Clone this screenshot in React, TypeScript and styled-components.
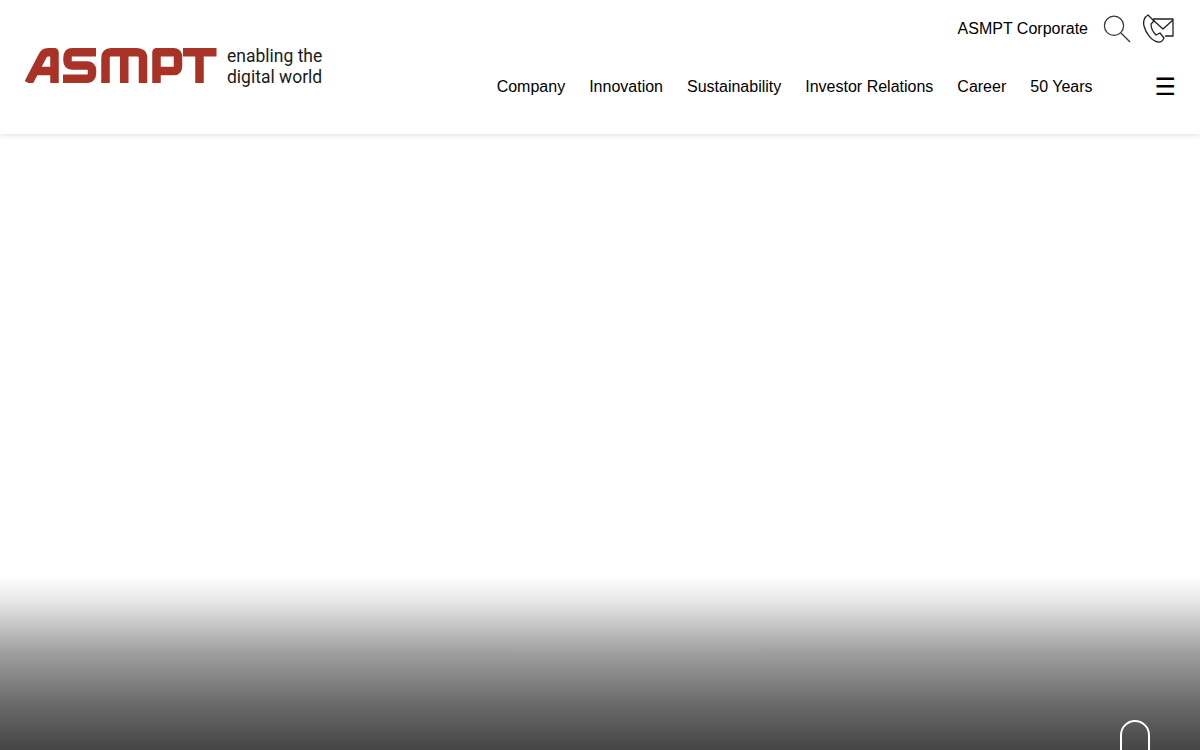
import React from 'react';
import styled, { createGlobalStyle } from 'styled-components';

const GlobalStyle = createGlobalStyle`
  html, body {
    margin: 0;
    padding: 0;
    height: 100%;
    overflow: hidden;
    background: #fff;
    font-family: "Liberation Sans", Arial, sans-serif;
  }
`;

const Page = styled.div`
  display: flex;
  flex-direction: column;
  height: 750px;
  overflow: hidden;
`;

const Header = styled.header`
  position: relative;
  z-index: 2;
  display: flex;
  justify-content: space-between;
  flex: 0 0 134px;
  padding: 0 25px;
  background: #fff;
  box-shadow: 0 1px 5px rgba(0, 0, 0, 0.14);
`;

const Brand = styled.a`
  display: flex;
  align-items: center;
  gap: 10px;
  height: 131px;
  color: #111;
  text-decoration: none;
`;

const Tagline = styled.span`
  font-family: Roboto, sans-serif;
  font-size: 17.5px;
  line-height: 21px;
  margin-top: 2px;
  color: #1a1a1a;
`;

const HeaderRight = styled.div`
  display: flex;
  flex-direction: column;
  align-items: flex-end;
`;

const TopRow = styled.div`
  display: flex;
  align-items: center;
  height: 58px;
`;

const TopLink = styled.a`
  font-size: 16px;
  color: #000;
  margin-right: 15px;
`;

const IconLink = styled.a<{ $gap?: number }>`
  display: flex;
  margin-right: ${p => p.$gap ?? 0}px;
`;

const NavRow = styled.nav`
  display: flex;
  align-items: center;
  height: 58px;
`;

const NavLink = styled.a`
  font-size: 16px;
  color: #000;
  margin-left: 24px;
`;

const Burger = styled.span`
  font-family: "DejaVu Sans", sans-serif;
  font-size: 24px;
  color: #000;
  margin-left: 61.9px;
  margin-right: 0.6px;
  width: 20px;
  text-align: center;
`;

const Hero = styled.main`
  position: relative;
  flex: 1;
  background: linear-gradient(
    to bottom,
    #fff 0,
    #fff 442px,
    #e6e6e6 468px,
    #a0a0a0 518px,
    #6c6c6c 568px,
    #454545 616px
  );
`;

const ScrollHint = styled.div`
  position: absolute;
  left: 1120px;
  top: 586px;
  box-sizing: border-box;
  width: 30px;
  height: 50px;
  border: 2px solid #fff;
  border-radius: 15px;
`;

const navItems = ['Company', 'Innovation', 'Sustainability', 'Investor Relations', 'Career', '50 Years'];

const LogoMark = () => (
  <svg width="192" height="35" viewBox="0 0 192 35" role="img" aria-label="ASMPT" fill="none" stroke="#a93226" strokeWidth="8.5" strokeLinejoin="round">
    <path d="M3.5 35 L17 9 Q19 4.25 23 4.25 H29.5 V35 M10 23 H29" />
    <path d="M71 4.25 H47 Q42.5 4.25 42.5 10 V12.5 Q42.5 17.5 47 17.5 H62 Q67 17.5 67 22.5 V25 Q67 30.75 62 30.75 H38" />
    <path d="M80.5 35 V10 Q80.5 4.25 86 4.25 H112 Q118 4.25 118 10 V35 M99.25 4.25 V35" />
    <path d="M131.5 35 V4.25 H149 Q153 4.25 153 9 V18 Q153 23 149 23 H131.5" />
    <path d="M158 4.25 H191.5 M174.5 4.25 V35" />
  </svg>
);

const SearchIcon = () => (
  <svg width="28" height="28" viewBox="0 0 28 28" fill="none" stroke="#333" strokeWidth="1.2">
    <circle cx="11" cy="10.8" r="9.6" />
    <path d="M18 18 L27 27" />
  </svg>
);

const ContactIcon = () => (
  <svg width="32" height="30" viewBox="0 0 32 30" fill="none" stroke="#222" strokeWidth="1.3" strokeLinejoin="round">
    <path d="M5 1 C1 3 0 8 1 12 C3 20 9 27 15 28 C18 29 20 26 21 24 L17 19 L13 21 C10 18 8 13 8 10 L11 7 Z" />
    <path d="M10 5 H30 V22 H22 M10 6 L20 15 L30 6" />
  </svg>
);

const App: React.FC = () => {
  return (
    <>
      <GlobalStyle />
      <Page>
        <Header>
          <Brand>
            <LogoMark />
            <Tagline>
              enabling the
              <br />
              digital world
            </Tagline>
          </Brand>
          <HeaderRight>
            <TopRow>
              <TopLink>ASMPT Corporate</TopLink>
              <IconLink $gap={12}>
                <SearchIcon />
              </IconLink>
              <IconLink>
                <ContactIcon />
              </IconLink>
            </TopRow>
            <NavRow>
              {navItems.map(item => (
                <NavLink key={item}>{item}</NavLink>
              ))}
              <Burger>☰</Burger>
            </NavRow>
          </HeaderRight>
        </Header>
        <Hero>
          <ScrollHint />
        </Hero>
      </Page>
    </>
  );
};

export default App;
